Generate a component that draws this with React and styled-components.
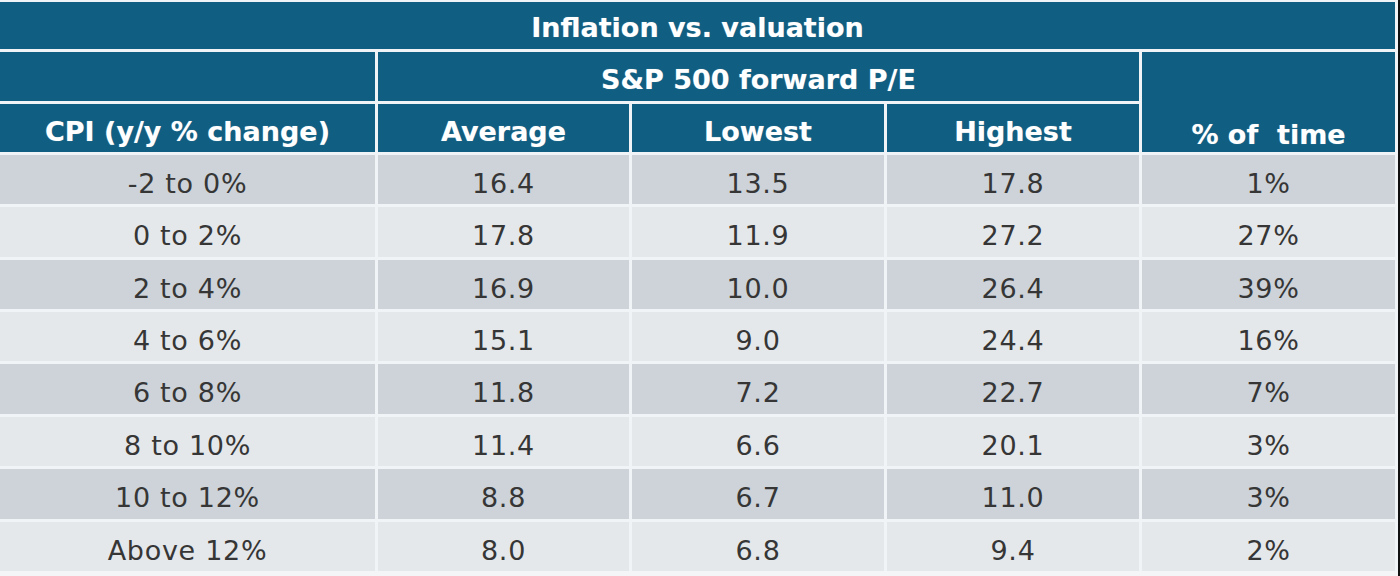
import React from "react";
import styled, { createGlobalStyle } from "styled-components";

const Global = createGlobalStyle`
  html, body {
    margin: 0;
    padding: 0;
    background: #ffffff;
  }
  body {
    font-family: "DejaVu Sans", "Liberation Sans", sans-serif;
  }
`;

const Frame = styled.div`
  width: 1400px;
  height: 576px;
  box-sizing: border-box;
  border-right: 2px solid #101010;
  background: #f3f5f7;
  overflow: hidden;
`;

const Table = styled.div`
  display: grid;
  grid-template-columns: 375px 251px 252px 252px 253px;
  grid-template-rows: 47px 49px 48px 49px 50px 49px 49px 50px 49px 50px 49px;
  gap: 3px;
  padding: 2px 3px 0 0;
  background: #f1f4f7;
  width: 1398px;
  box-sizing: border-box;
`;

const HeadCell = styled.div`
  background: #105e81;
  color: #ffffff;
  font-family: "DejaVu Sans", "Liberation Sans", sans-serif;
  font-weight: 700;
  font-size: 27px;
  display: flex;
  justify-content: center;
  align-items: ${(p) => (p.$bottom ? "flex-end" : "center")};
  padding-top: ${(p) => (p.$bottom ? "0" : p.$pt || "3px")};
  padding-bottom: ${(p) => (p.$bottom ? "2px" : "0")};
  box-sizing: border-box;
  grid-column: ${(p) => p.$col || "auto"};
  grid-row: ${(p) => p.$row || "auto"};
  white-space: pre;
  text-shadow: 0 0 1px rgba(255, 255, 255, 0.4);
`;

const BodyCell = styled.div`
  background: ${(p) => (p.$shade ? "#cdd3d9" : "#e5e8eb")};
  color: #363636;
  font-family: "DejaVu Sans", "Liberation Sans", sans-serif;
  font-size: 27px;
  letter-spacing: 0.7px;
  display: flex;
  justify-content: center;
  align-items: center;
  padding-top: 7px;
  box-sizing: border-box;
  white-space: pre;
`;

const rows = [
  ["-2 to 0%", "16.4", "13.5", "17.8", "1%"],
  ["0 to 2%", "17.8", "11.9", "27.2", "27%"],
  ["2 to 4%", "16.9", "10.0", "26.4", "39%"],
  ["4 to 6%", "15.1", "9.0", "24.4", "16%"],
  ["6 to 8%", "11.8", "7.2", "22.7", "7%"],
  ["8 to 10%", "11.4", "6.6", "20.1", "3%"],
  ["10 to 12%", "8.8", "6.7", "11.0", "3%"],
  ["Above 12%", "8.0", "6.8", "9.4", "2%"],
];

export default function App() {
  return (
    <>
      <Global />
      <Frame>
        <Table>
          <HeadCell $col="1 / -1" $row="1" $pt="4px">Inflation vs. valuation</HeadCell>
          <HeadCell $col="1" $row="2" />
          <HeadCell $col="2 / 5" $row="2" $pt="6px">S&amp;P 500 forward P/E</HeadCell>
          <HeadCell $col="5" $row="2 / 4" $bottom>% of  time</HeadCell>
          <HeadCell $col="1" $row="3" $pt="7px">CPI (y/y % change)</HeadCell>
          <HeadCell $col="2" $row="3" $pt="7px">Average</HeadCell>
          <HeadCell $col="3" $row="3" $pt="7px">Lowest</HeadCell>
          <HeadCell $col="4" $row="3" $pt="7px">Highest</HeadCell>
          {rows.map((r, i) =>
            r.map((v, j) => (
              <BodyCell key={`${i}-${j}`} $shade={i % 2 === 0}>
                {v}
              </BodyCell>
            ))
          )}
        </Table>
      </Frame>
    </>
  );
}
